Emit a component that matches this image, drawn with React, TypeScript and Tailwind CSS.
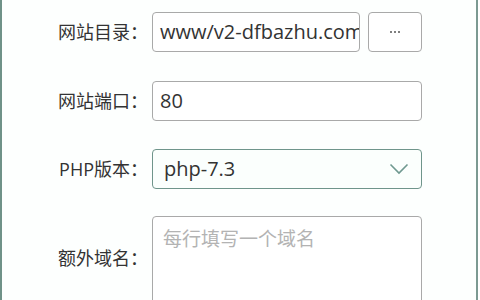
import React from "react";

const font = { fontFamily: '"Open Sans", "Noto Sans CJK SC", sans-serif' };

function Label({ children }: { children: React.ReactNode }) {
  return (
    <div
      className="w-[146px] shrink-0 text-right text-[18px] text-[#333333]"
      style={{ fontFamily: '"Open Sans", "Noto Sans CJK SC", sans-serif' }}
    >
      {children}
    </div>
  );
}

export default function App() {
  return (
    <div
      className="relative h-[300px] w-[480px] overflow-hidden bg-white"
      style={font}
    >
      <div className="flex h-full">
        <div className="w-[2px] shrink-0 bg-[#6f9288]" />
        <div className="flex flex-1 flex-col bg-[#fdfffe] pt-[12px]">
          <div className="flex h-[40px] items-center">
            <Label>网站目录：</Label>
            <div className="ml-[4px] flex h-[40px] w-[208px] items-center overflow-hidden rounded-[4px] border border-[#a9a9a9] bg-white pl-[7px] text-[20px] whitespace-nowrap text-[#333333]">
              www/v2-dfbazhu.com
            </div>
            <div className="ml-[8px] flex h-[40px] w-[54px] items-center justify-center gap-[2px] rounded-[4px] border border-[#a9a9a9] bg-white">
              <span className="h-[2px] w-[2px] rounded-full bg-[#555555]" />
              <span className="h-[2px] w-[2px] rounded-full bg-[#555555]" />
              <span className="h-[2px] w-[2px] rounded-full bg-[#555555]" />
            </div>
          </div>
          <div className="mt-[29px] flex h-[40px] items-center">
            <Label>网站端口：</Label>
            <div className="ml-[4px] flex h-[40px] w-[270px] items-center rounded-[4px] border border-[#a9a9a9] bg-white pl-[7px] text-[20px] text-[#333333]">
              80
            </div>
          </div>
          <div className="mt-[28px] flex h-[40px] items-center">
            <Label>PHP版本：</Label>
            <div className="ml-[4px] flex h-[40px] w-[270px] items-center justify-between rounded-[4px] border border-[#6f958b] bg-[#fbfffd] pl-[11px] pr-[12px] text-[20px] text-[#333333]">
              <span>php-7.3</span>
              <svg width="20" height="12" viewBox="0 0 20 12" fill="none">
                <path d="M1.5 1.5 L10 10 L18.5 1.5" stroke="#6f9990" strokeWidth="1.6" />
              </svg>
            </div>
          </div>
          <div className="mt-[27px] flex items-start">
            <div className="mt-[29px]">
              <Label>额外域名：</Label>
            </div>
            <div
              className="ml-[4px] h-[100px] w-[270px] rounded-[4px] border border-[#a9a9a9] bg-white pl-[10px] pt-[7px] text-[19px] text-[#b3b3b3]"
              style={{ fontFamily: '"Noto Sans CJK SC", sans-serif' }}
            >
              每行填写一个域名
            </div>
          </div>
        </div>
        <div className="w-[2px] shrink-0 bg-[#7c9a92]" />
        <div className="w-[2px] shrink-0 bg-white" />
      </div>
    </div>
  );
}
